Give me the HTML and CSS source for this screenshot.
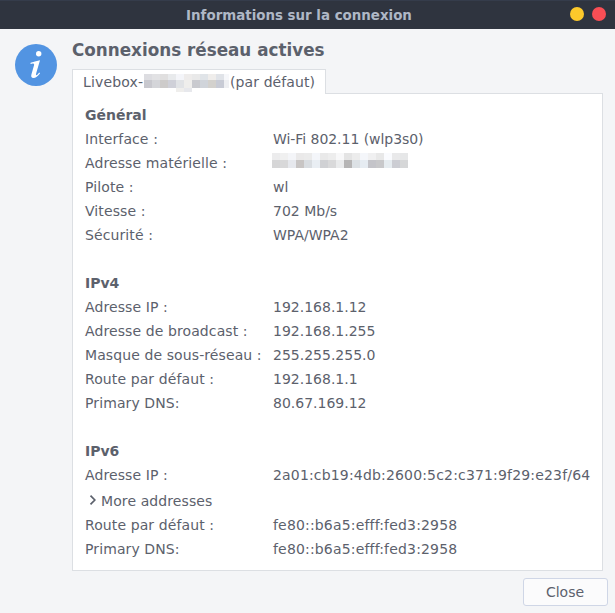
FILE: index.html
```html
<!DOCTYPE html>
<html lang="fr">
<head>
<meta charset="utf-8">
<title>Informations sur la connexion</title>
<link rel="stylesheet" href="styles.css">
</head>
<body>
<div class="window">
  <header class="titlebar">
    <h1 class="title">Informations sur la connexion</h1>
    <div class="controls"><span class="control minimize"></span><span class="control close"></span></div>
  </header>
  <main class="content">
    <svg class="info" width="42" height="42" viewBox="0 0 42 42" aria-hidden="true">
      <circle cx="21" cy="21" r="21" fill="#5294e2"/>
      <circle cx="23.7" cy="9.8" r="2.7" fill="#fff"/>
      <path d="M15.6 18.8Q19.6 17.2 25 16.2L21.2 29.3Q20.6 31.4 21.6 31.2Q22.7 30.8 24.2 28.6L25.1 29.3Q21.7 34 18.4 34Q15.5 33.9 16.4 30.6L19.1 20.9Q19.5 19.2 17.9 19.4L15.5 19.9Z" fill="#fff"/>
    </svg>
    <section class="panel">
      <h2 class="heading">Connexions réseau actives</h2>
      <div class="tab"><span class="network">Livebox-</span><svg class="mask mask-tab" width="86" height="18" shape-rendering="crispEdges" aria-hidden="true">
        <path fill="#dddde1" d="M0 0h8v6H0z"/><path fill="#e2e2e4" d="M8 0h8v6H8z"/><path fill="#e0dfdf" d="M16 0h8v6h-8z"/><path fill="#e8eaec" d="M24 0h8v6h-8z"/><path fill="#f4f5f9" d="M32 0h8v6h-8z"/><path fill="#eeeceb" d="M40 0h8v6h-8z"/><path fill="#e9e9e9" d="M48 0h8v6h-8z"/><path fill="#e0e4e8" d="M56 0h8v6h-8z"/><path fill="#efedeb" d="M64 0h8v6h-8z"/><path fill="#e0e3e8" d="M72 0h8v6h-8z"/><path fill="#f6f7fa" d="M80 0h5v6h-5z"/>
        <path fill="#c8c8ce" d="M0 6h8v8H0z"/><path fill="#d4d5d9" d="M8 6h8v8H8z"/><path fill="#cdcbca" d="M16 6h8v8h-8z"/><path fill="#cfd0d8" d="M24 6h8v8h-8z"/><path fill="#e1e3e6" d="M32 6h8v8h-8z"/><path fill="#efeeec" d="M40 6h8v8h-8z"/><path fill="#c9cacf" d="M48 6h8v8h-8z"/><path fill="#d0d4da" d="M56 6h8v8h-8z"/><path fill="#d3d1cd" d="M64 6h8v8h-8z"/><path fill="#c8cbd5" d="M72 6h8v8h-8z"/><path fill="#eeeff2" d="M80 6h5v8h-5z"/>
        <path fill="#efeeec" d="M32 14h8v4h-8z"/><path fill="#e7e8ec" d="M40 14h8v4h-8z"/>
      </svg><span class="suffix">(par défaut)</span></div>
      <div class="page">
        <h3>Général</h3>
        <dl>
          <dt>Interface :</dt><dd class="plain">Wi-Fi 802.11 (wlp3s0)</dd>
          <dt>Adresse matérielle :</dt><dd><svg class="mask mask-mac" width="136" height="15" shape-rendering="crispEdges" aria-hidden="true">
            <path fill="#ececed" d="M0 0h8v7H0z"/><path fill="#f0f0f0" d="M8 0h8v7H8z"/><path fill="#f4f5f8" d="M16 0h8v7h-8z"/><path fill="#eae9e9" d="M24 0h8v7h-8z"/><path fill="#ebebeb" d="M32 0h8v7h-8z"/><path fill="#f4f6fa" d="M40 0h8v7h-8z"/><path fill="#e9e9e9" d="M48 0h8v7h-8z"/><path fill="#ededed" d="M56 0h8v7h-8z"/><path fill="#f8f8f9" d="M64 0h8v7h-8z"/><path fill="#e4e4e4" d="M72 0h8v7h-8z"/><path fill="#ececec" d="M80 0h8v7h-8z"/><path fill="#f4f6fa" d="M88 0h8v7h-8z"/><path fill="#f0f0f1" d="M96 0h8v7h-8z"/><path fill="#e8e8e8" d="M104 0h8v7h-8z"/><path fill="#fafbfe" d="M112 0h8v7h-8z"/><path fill="#e9e9ea" d="M120 0h8v7h-8z"/><path fill="#e6e7e8" d="M128 0h8v7h-8z"/>
            <path fill="#d6d6d7" d="M0 7h8v8H0z"/><path fill="#d8d8d9" d="M8 7h8v8H8z"/><path fill="#e6e8ed" d="M16 7h8v8h-8z"/><path fill="#c8c5c4" d="M24 7h8v8h-8z"/><path fill="#d9dde1" d="M32 7h8v8h-8z"/><path fill="#e9eef3" d="M40 7h8v8h-8z"/><path fill="#d0d1d4" d="M48 7h8v8h-8z"/><path fill="#d9d9da" d="M56 7h8v8h-8z"/><path fill="#eaebec" d="M64 7h8v8h-8z"/><path fill="#b6b5b5" d="M72 7h8v8h-8z"/><path fill="#dce1e5" d="M80 7h8v8h-8z"/><path fill="#e6ecf2" d="M88 7h8v8h-8z"/><path fill="#c4c4c9" d="M96 7h8v8h-8z"/><path fill="#c8c8ca" d="M104 7h8v8h-8z"/><path fill="#e6ecf0" d="M112 7h8v8h-8z"/><path fill="#cccdd3" d="M120 7h8v8h-8z"/><path fill="#d6d7d8" d="M128 7h8v8h-8z"/>
          </svg></dd>
          <dt>Pilote :</dt><dd>wl</dd>
          <dt>Vitesse :</dt><dd>702 Mb/s</dd>
          <dt>Sécurité :</dt><dd>WPA/WPA2</dd>
        </dl>
        <h3>IPv4</h3>
        <dl>
          <dt>Adresse IP :</dt><dd>192.168.1.12</dd>
          <dt>Adresse de broadcast :</dt><dd>192.168.1.255</dd>
          <dt>Masque de sous-réseau :</dt><dd>255.255.255.0</dd>
          <dt>Route par défaut :</dt><dd>192.168.1.1</dd>
          <dt>Primary DNS:</dt><dd>80.67.169.12</dd>
        </dl>
        <h3>IPv6</h3>
        <dl class="ipv6">
          <dt>Adresse IP :</dt><dd>2a01:cb19:4db:2600:5c2:c371:9f29:e23f/64</dd>
          <dt class="expander"><svg width="16" height="16" viewBox="0 0 16 16" aria-hidden="true"><path d="M5.5 3.6L9.8 8L5.5 12.4" fill="none" stroke="#5c616c" stroke-width="1.7"/></svg>More addresses</dt>
          <dt>Route par défaut :</dt><dd>fe80::b6a5:efff:fed3:2958</dd>
          <dt>Primary DNS:</dt><dd>fe80::b6a5:efff:fed3:2958</dd>
        </dl>
      </div>
    </section>
  </main>
  <footer class="actions"><button class="button">Close</button></footer>
</div>
</body>
</html>
```
FILE: styles.css
```css
* { box-sizing: border-box; }
body, h1, h2, h3, dl, dt, dd { margin: 0; }
body {
  background: #f5f6f7;
  color: #5c616c;
  font: 14px/24px "DejaVu Sans", sans-serif;
  white-space: nowrap;
}
.window { height: 613px; overflow: hidden; background: #f4f5f7; }
.titlebar {
  height: 29px;
  display: grid;
  grid-template-columns: 1fr auto 1fr;
  align-items: start;
  padding: 0 9px;
  background: #2f343f;
  border-top: 1px solid #353c4b;
}
.title { grid-column: 2; padding: 1px 17px 0 0; font-size: 13.4px; line-height: 28px; color: #afb8c6; }
.controls { display: flex; gap: 8px; justify-content: flex-end; padding-top: 6px; }
.control { width: 14px; height: 14px; border-radius: 50%; }
.minimize { background: #fdc92b; }
.close { background: #f94e55; }
.content { display: flex; gap: 15px; padding: 9px 12px 0 15px; }
.info { flex: none; margin-top: 6px; }
.panel { flex: 1; min-width: 0; }
.heading { font-size: 16.8px; line-height: 25px; margin-bottom: 6px; }
.tab {
  position: relative;
  z-index: 1;
  display: flex;
  align-items: center;
  width: 254px;
  height: 25px;
  padding-left: 10px;
  background: #fff;
  border: 1px solid #dcdfe3;
  border-bottom: 0;
}
.network { width: 61px; letter-spacing: .15px; }
.suffix { letter-spacing: .1px; }
.mask { display: block; flex: none; }
.mask-tab { margin: 2px 0 0; }
.page {
  height: 478px;
  margin-top: -1px;
  padding: 9px 12px;
  background: #fff;
  border: 1px solid #dcdfe3;
}
h3 { font-size: 14px; line-height: 24px; }
dl { display: grid; grid-template-columns: 188px 1fr; margin-bottom: 24px; }
dt { letter-spacing: .1px; }
.plain { letter-spacing: -.05px; }
.ipv6 dd { letter-spacing: .17px; }
.mask-mac { margin: 2px 0 0 -1px; }
.expander { grid-column: 1 / -1; display: flex; align-items: center; height: 26px; padding-top: 2px; }
.expander svg { margin-top: -3px; }
.actions { display: flex; justify-content: flex-end; padding: 7px 7px 0; }
.button {
  width: 85px;
  height: 28px;
  padding: 0 1px 0 0;
  font: inherit;
  line-height: 26px;
  color: inherit;
  background: #fbfbfc;
  border: 1px solid #cfd6e6;
  border-radius: 3px;
}
```
